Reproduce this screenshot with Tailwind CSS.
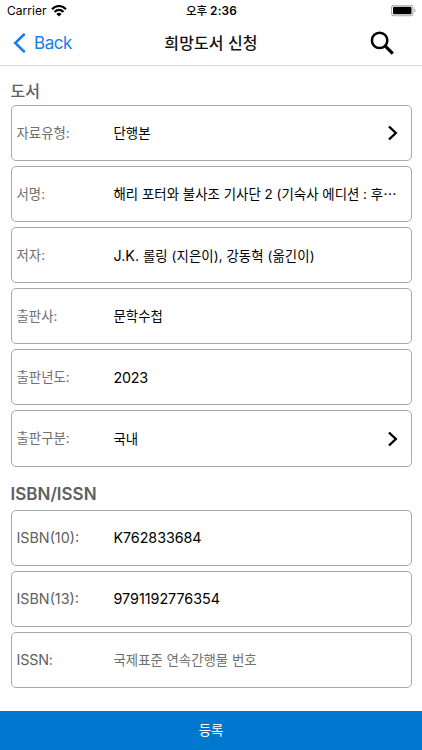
<!DOCTYPE html>
<html lang="ko">
<head>
<meta charset="utf-8">
<title>희망도서 신청</title>
<script src="https://cdn.jsdelivr.net/npm/@tailwindcss/browser@4"></script>
</head>
<body class="bg-white">
<div class="w-[422px] h-[750px] flex flex-col overflow-hidden bg-white text-black font-['Inter','Noto_Sans_CJK_KR',sans-serif] text-[13.4px] whitespace-nowrap">
  <div class="h-[22px] shrink-0 grid grid-cols-3 items-center pl-[7px] pr-[6px]">
    <div class="flex items-center gap-[4px]">
      <span class="text-[12px] leading-[22px] tracking-[0.05px]">Carrier</span>
      <svg class="w-[16px] h-[12px]" viewBox="0 0 16 12"><path d="M1 4.3C5-.1 11-.1 15 4.3M3.5 7C6.2 4.2 9.8 4.2 12.500 7" fill="none" stroke="#000" stroke-width="2.1"/><path d="M5.400 8.900C6.900 7.500 9.100 7.500 10.600 8.900L8 11.600Z"/></svg>
    </div>
    <div class="text-center text-[11.800px] leading-[22px] font-semibold tracking-[0.2px]"><span class="text-[11.500px] font-medium tracking-[-0.1px]">오후</span> <span>2:36</span></div>
    <div class="flex justify-end"><svg class="w-[26px] h-[12px]" viewBox="0 0 26 12"><rect x="1.500" y="0.200" width="21.500" height="10.600" rx="3" fill="#fff" stroke="#aaa" stroke-width="1.100"/><rect x="3" y="1.700" width="18.500" height="7.600" rx="1.400"/><path d="M24.300 3.500v4q1.200-.6 1.200-2t-1.200-2Z" fill="#aaa"/></svg></div>
  </div>
  <div class="h-[44px] shrink-0 grid grid-cols-[130px_1fr_130px] items-center border-b border-[#d8d8d8]">
    <div class="flex items-center pl-[13px] pb-px gap-[8px] text-[#1a7cec]">
      <svg class="w-[13px] h-[20px]" viewBox="0 0 13 20"><path d="M11 1.500 2.200 10 11 18.500" fill="none" stroke="currentColor" stroke-width="2.500" stroke-linecap="round"/></svg>
      <span class="text-[17px] leading-[22px] tracking-[-0.45px]">Back</span>
    </div>
    <h1 class="text-center text-[16px] leading-[22px] pb-px tracking-[0.1px] font-medium text-[#111]">희망도서 신청</h1>
    <div class="flex justify-end pr-[27px] pb-px"><svg class="w-[26px] h-[26px]" viewBox="0 0 26 26" fill="none" stroke="#000"><circle cx="10.600" cy="10.400" r="7.700" stroke-width="2.500"/><path d="m15.800 15.700 8 8" stroke-width="3.200"/></svg></div>
  </div>
  <main class="flex-1 px-[10.500px] pt-[14px] text-black">
    <h2 class="h-[25px] text-[16px] leading-[22px] font-medium text-[#606060]">도서</h2>
    <div class="flex flex-col gap-[5px]">
      <div class="h-[56.100px] flex items-center border border-[#a8a8a8] rounded-[5px] pl-[5px] pr-[12px]"><span class="w-[97px] shrink-0 text-[#707070]">자료유형:</span><span class="flex-1 pt-px">단행본</span><svg class="w-[12px] h-[16px]" viewBox="0 0 12 16"><path d="m2 1.500 6.800 6.500L2 14.500" fill="none" stroke="#000" stroke-width="2.400"/></svg></div>
      <div class="h-[56.100px] flex items-center border border-[#a8a8a8] rounded-[5px] pl-[5px] pr-[11px]"><span class="w-[97px] shrink-0 text-[#707070]">서명:</span><span class="flex-1 tracking-[0.030px]">해리 포터와 불사조 기사단 2 (기숙사 에디션 : 후⋯</span></div>
      <div class="h-[56.100px] flex items-center border border-[#a8a8a8] rounded-[5px] pl-[5px] pr-[11px]"><span class="w-[97px] shrink-0 text-[#707070]">저자:</span><span class="flex-1"><span class="text-[14.300px]">J.K.</span><span class="tracking-[0.080px]"> 롤링 (지은이), 강동혁 (옮긴이)</span></span></div>
      <div class="h-[56.100px] flex items-center border border-[#a8a8a8] rounded-[5px] pl-[5px] pr-[11px]"><span class="w-[97px] shrink-0 text-[#707070]">출판사:</span><span class="flex-1">문학수첩</span></div>
      <div class="h-[56.100px] flex items-center border border-[#a8a8a8] rounded-[5px] pl-[5px] pr-[11px]"><span class="w-[97px] shrink-0 text-[#707070]">출판년도:</span><span class="flex-1 text-[14.300px] tracking-[-0.2px]">2023</span></div>
      <div class="h-[56.100px] flex items-center border border-[#a8a8a8] rounded-[5px] pl-[5px] pr-[12px]"><span class="w-[97px] shrink-0 text-[#707070]">출판구분:</span><span class="flex-1 pt-px">국내</span><svg class="w-[12px] h-[16px]" viewBox="0 0 12 16"><path d="m2 1.500 6.800 6.500L2 14.500" fill="none" stroke="#000" stroke-width="2.400"/></svg></div>
    </div>
    <h2 class="mt-[16px] h-[27px] text-[17px] leading-[22px] font-semibold text-[#606060]">ISBN/ISSN</h2>
    <div class="flex flex-col gap-[5px]">
      <div class="h-[56.100px] flex items-center border border-[#a8a8a8] rounded-[5px] pl-[5px] pr-[11px] text-[14.300px]"><span class="w-[97px] shrink-0 text-[#606060]">ISBN(10):</span><span class="flex-1 tracking-[-0.050px]">K762833684</span></div>
      <div class="h-[56.100px] flex items-center border border-[#a8a8a8] rounded-[5px] pl-[5px] pr-[11px] text-[14.300px]"><span class="w-[97px] shrink-0 text-[#606060]">ISBN(13):</span><span class="flex-1">9791192776354</span></div>
      <div class="h-[56.100px] flex items-center border border-[#a8a8a8] rounded-[5px] pl-[5px] pr-[11px]"><span class="w-[97px] shrink-0 text-[#606060] text-[14.300px] tracking-[-0.150px]">ISSN:</span><span class="flex-1 text-[#707070]">국제표준 연속간행물 번호</span></div>
    </div>
  </main>
  <button class="h-[39px] shrink-0 bg-[#0078d0] text-white text-[13.400px] leading-[39px]">등록</button>
</div>
</body>
</html>
